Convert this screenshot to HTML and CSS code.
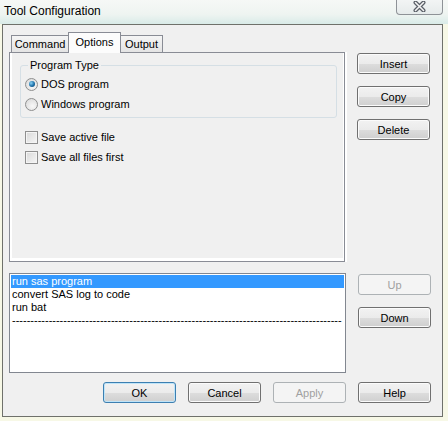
FILE: index.html
```html
<!DOCTYPE html>
<html lang="en">
<head>
    <meta charset="UTF-8">
    <title>Tool Configuration</title>
    <link rel="stylesheet" href="styles.css">
</head>
<body>
    <div class="titlebar">
        <span class="title">Tool Configuration</span>
        <div class="close-btn">
            <svg width="13" height="11" viewBox="0 0 13 11">
                <path d="M2.5 1.5 L10.5 9.5 M10.5 1.5 L2.5 9.5" stroke="#5b6068" stroke-width="4" stroke-linecap="round"/>
                <path d="M2.5 1.5 L10.5 9.5 M10.5 1.5 L2.5 9.5" stroke="#f4f4f4" stroke-width="1.6" stroke-linecap="round"/>
            </svg>
        </div>
    </div>

    <div class="dialog">
        <div class="row top-row">
            <div class="tabs-col">
                <div class="tabstrip">
                    <div class="tab tab-command">Command</div>
                    <div class="tab tab-options selected">Options</div>
                    <div class="tab tab-output">Output</div>
                </div>
                <div class="pane">
                    <div class="pane-inner">
                        <fieldset class="group">
                            <legend>Program Type</legend>
                            <div class="opt"><span class="radio checked"></span>DOS program</div>
                            <div class="opt"><span class="radio"></span>Windows program</div>
                        </fieldset>
                        <div class="checks">
                            <div class="opt"><span class="check"></span>Save active file</div>
                            <div class="opt"><span class="check"></span>Save all files first</div>
                        </div>
                    </div>
                </div>
            </div>
            <div class="side side-top">
                <button class="btn">Insert</button>
                <button class="btn">Copy</button>
                <button class="btn">Delete</button>
            </div>
        </div>

        <div class="row mid-row">
            <div class="listbox">
                <div class="item selected">run sas program</div>
                <div class="item">convert SAS log to code</div>
                <div class="item">run bat</div>
                <div class="item sep">------------------------------------------------------------------------------------------</div>
            </div>
            <div class="side side-mid">
                <button class="btn" disabled>Up</button>
                <button class="btn">Down</button>
            </div>
        </div>

        <div class="row bottom-row">
            <button class="btn default">OK</button>
            <button class="btn">Cancel</button>
            <button class="btn" disabled>Apply</button>
            <button class="btn">Help</button>
        </div>
    </div>
</body>
</html>
```

FILE: styles.css
```css
body {
    margin: 0;
    width: 448px;
    height: 421px;
    background: #f7f8e6;
    font-family: "Liberation Sans", Arial, sans-serif;
    font-size: 11px;
    color: #000;
    overflow: hidden;
}
.titlebar {
    height: 24px;
    display: flex;
    justify-content: space-between;
    background: linear-gradient(#f6f8f6, #eef4f1 60%, #d9ebe8);
}
.title {
    font-size: 12px;
    padding: 4px 0 0 4px;
}
.close-btn {
    width: 45px;
    height: 15px;
    margin-right: 5px;
    margin-top: -1px;
    border: 1px solid #8e9297;
    border-top: none;
    border-radius: 0 0 4px 4px;
    background: linear-gradient(#f3f5f5, #e6ebeb);
    display: flex;
    justify-content: center;
    align-items: center;
}
.dialog {
    box-sizing: border-box;
    width: 441px;
    height: 393px;
    margin-left: 2px;
    border: 1px solid #6f716b;
    background: #f0f0f0;
    padding-right: 11px;
}
.row {
    display: flex;
}
.top-row {
    margin-top: 7px;
    padding-left: 6px;
}
.tabs-col {
    width: 336px;
}
.tabstrip {
    height: 20px;
    display: flex;
    align-items: flex-end;
    padding-left: 2px;
    position: relative;
    z-index: 1;
}
.tab {
    box-sizing: border-box;
    height: 17px;
    border: 1px solid #898c95;
    border-bottom: none;
    background: linear-gradient(#f5f5f5, #e4e4e4);
    text-align: center;
    line-height: 15px;
    padding-top: 1px;
}
.tab-command {
    width: 57px;
    border-right: none;
}
.tab-options {
    width: 53px;
}
.tab-output {
    width: 42px;
    border-left: none;
}
.tab.selected {
    height: 21px;
    margin-bottom: -1px;
    background: #fcfcfc;
    padding-top: 2px;
}
.pane {
    box-sizing: border-box;
    height: 210px;
    border: 1px solid #898c95;
    background: #fff;
    box-shadow: 2px 0 0 #fff;
}
.pane-inner {
    height: 205px;
    margin: 0 1px 2px 2px;
    background: #f0f0f0;
    overflow: hidden;
}
.group {
    box-sizing: border-box;
    width: 317px;
    height: 59px;
    margin: 6px 0 0 8px;
    padding: 0 0 0 4px;
    border: 1px solid #d5dfe5;
    border-radius: 3px;
}
.group legend {
    margin-left: 3px;
    padding: 0 2px;
    line-height: 13px;
}
.opt {
    height: 20px;
    display: flex;
    align-items: center;
}
.group .opt:first-of-type {
    margin-top: 2px;
}
.radio {
    box-sizing: border-box;
    width: 13px;
    height: 13px;
    margin-right: 3px;
    border: 1px solid #8e8f8f;
    border-radius: 50%;
    background: radial-gradient(circle at 60% 65%, #f8f8f8, #d6d6d6);
    position: relative;
}
.radio.checked::after {
    content: "";
    position: absolute;
    left: 2.5px;
    top: 2.5px;
    width: 6px;
    height: 6px;
    border-radius: 50%;
    background: radial-gradient(circle at 35% 35%, #8ad3f5, #1b6fa8 55%, #0d3f64);
}
.checks {
    margin-top: 9px;
    padding-left: 13px;
}
.check {
    box-sizing: border-box;
    width: 13px;
    height: 13px;
    margin-right: 3px;
    border: 1px solid #8f8f8f;
    background: linear-gradient(135deg, #d8d8d8, #f6f6f6);
    box-shadow: inset 0 0 0 1px #f4f4f4;
}
.mid-row {
    margin-top: 11px;
    padding-left: 6px;
}
.listbox {
    box-sizing: border-box;
    width: 337px;
    height: 100px;
    border: 1px solid #828790;
    background: #fff;
    padding: 1px 1px;
}
.item {
    height: 13px;
    line-height: 13px;
    padding-left: 1px;
    white-space: nowrap;
}
.item.selected {
    background: #3399ff;
    color: #fff;
}
.side {
    margin-left: 12px;
    display: flex;
    flex-direction: column;
    gap: 12px;
}
.side-top {
    padding-top: 21px;
}
.side-mid {
    padding-top: 1px;
}
.btn {
    box-sizing: border-box;
    width: 73px;
    height: 21px;
    padding: 0;
    border: 1px solid #707070;
    border-radius: 3px;
    background: linear-gradient(#f2f2f2, #ebebeb 50%, #dddddd 51%, #cfcfcf);
    box-shadow: inset 0 0 0 1px #fbfbfb;
    font-family: "Liberation Sans", Arial, sans-serif;
    font-size: 11px;
    color: #000;
}
.btn:disabled {
    border-color: #adb2b5;
    background: #f4f4f4;
    box-shadow: none;
    color: #a0a0a0;
}
.btn.default {
    border-color: #3c7fb1;
    box-shadow: inset 0 0 0 1px #bfe4f8;
}
.bottom-row {
    margin-top: 9px;
    justify-content: flex-end;
    gap: 12px;
}
```
